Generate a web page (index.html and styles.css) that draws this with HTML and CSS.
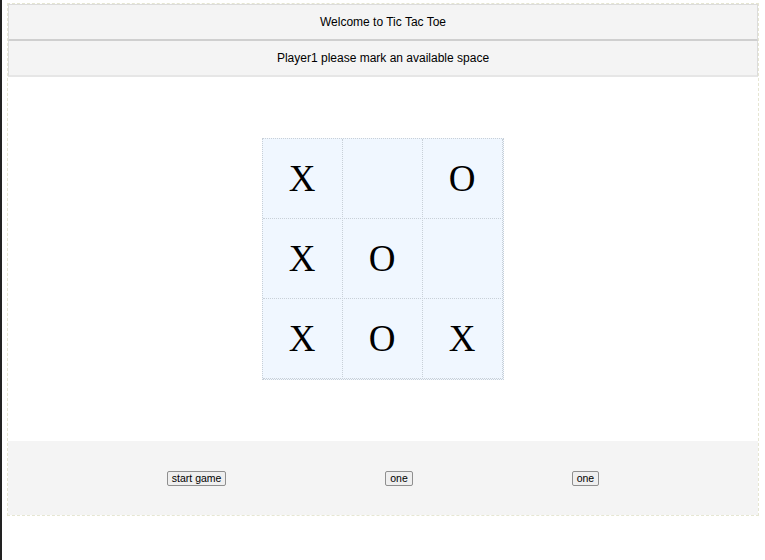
FILE: index.html
```
<!DOCTYPE html>
<html>
<head>
<meta charset="utf-8">
<link rel="stylesheet" href="styles.css">
</head>
<body>
<div class="app">
  <div class="bar bar-title">Welcome to Tic Tac Toe</div>
  <div class="bar bar-status">Player1 please mark an available space</div>
  <div class="main">
    <div class="board">
      <div class="cell">X</div>
      <div class="cell"></div>
      <div class="cell">O</div>
      <div class="cell">X</div>
      <div class="cell">O</div>
      <div class="cell"></div>
      <div class="cell">X</div>
      <div class="cell">O</div>
      <div class="cell">X</div>
    </div>
  </div>
  <div class="footer">
    <button class="btn">start game</button>
    <button class="btn">one</button>
    <button class="btn">one</button>
  </div>
</div>
</body>
</html>
```
FILE: styles.css
```
html, body {
  margin: 0;
  padding: 0;
  background: #fff;
}
body {
  min-height: 100vh;
  box-sizing: border-box;
  border-left: 2px solid #222;
  padding: 3px 6px 0 5px;
  font-family: "Liberation Sans", Arial, sans-serif;
}
.app {
  border: 1px dashed #e6e6d2;
}
.bar {
  background: #f4f4f4;
  border: 1px solid #dcdcdc;
  text-align: center;
  font-size: 12px;
  color: #000;
  box-sizing: border-box;
}
.bar-title {
  height: 37px;
  line-height: 35px;
  border-bottom: 2px solid #cfcfcf;
}
.bar-status {
  height: 36px;
  line-height: 34px;
  border-top: none;
  border-bottom: 2px solid #e6e6e6;
}
.main {
  height: 364px;
  display: flex;
  justify-content: center;
  align-items: center;
}
.board {
  display: grid;
  grid-template-columns: repeat(3, 80px);
  grid-template-rows: repeat(3, 80px);
  background: #f0f7ff;
  border: 1px dotted #c8d0d8;
  margin-right: 1px;
}
.cell {
  border: 1px dotted #c8d0d8;
  margin: -1px 0 0 -1px;
  display: flex;
  align-items: center;
  justify-content: center;
  font-family: "Liberation Serif", "Times New Roman", serif;
  font-size: 37px;
  color: #000;
}
.cell:nth-child(3n+1) { border-left: none; margin-left: 0; }
.board .cell:nth-child(-n+3) { border-top: none; margin-top: 0; }
.footer {
  height: 74px;
  background: #f4f4f4;
  display: flex;
  justify-content: space-evenly;
  align-items: center;
}
.btn {
  font-family: "Liberation Sans", Arial, sans-serif;
  font-size: 10.5px;
  line-height: 13px;
  padding: 0 4px;
  border: 1px solid #8f8f8f;
  border-radius: 2px;
  background: #efefef;
  color: #000;
}
```
